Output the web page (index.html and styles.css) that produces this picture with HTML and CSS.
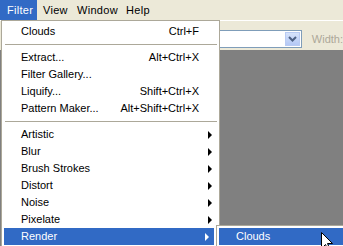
FILE: index.html
```html
<!DOCTYPE html>
<html lang="en">
<head>
  <meta charset="UTF-8" />
  <title>Filter menu</title>
  <link rel="stylesheet" href="styles.css">
</head>
<body>
  <div class="app">

    <div class="menubar">
      <span class="top-item active">Filter</span>
      <span class="top-item">View</span>
      <span class="top-item">Window</span>
      <span class="top-item">Help</span>
    </div>

    <div class="optionsbar">
      <div class="combo">
        <div class="combo-btn">
          <svg width="9" height="6" viewBox="0 0 9 6"><path d="M1 1 L4.5 4.5 L8 1" fill="none" stroke="#4d6185" stroke-width="2"/></svg>
        </div>
      </div>
      <span class="disabled-label">Width:</span>
    </div>

    <div class="canvas"></div>

    <div class="menu">
      <div class="item"><span class="label">Clouds</span><span class="key">Ctrl+F</span><span class="sub"></span></div>
      <div class="sep"></div>
      <div class="item"><span class="label">Extract...</span><span class="key">Alt+Ctrl+X</span><span class="sub"></span></div>
      <div class="item"><span class="label">Filter Gallery...</span><span class="key"></span><span class="sub"></span></div>
      <div class="item"><span class="label">Liquify...</span><span class="key">Shift+Ctrl+X</span><span class="sub"></span></div>
      <div class="item"><span class="label">Pattern Maker...</span><span class="key">Alt+Shift+Ctrl+X</span><span class="sub"></span></div>
      <div class="sep"></div>
      <div class="item"><span class="label">Artistic</span><span class="sub arrow"></span></div>
      <div class="item"><span class="label">Blur</span><span class="sub arrow"></span></div>
      <div class="item"><span class="label">Brush Strokes</span><span class="sub arrow"></span></div>
      <div class="item"><span class="label">Distort</span><span class="sub arrow"></span></div>
      <div class="item"><span class="label">Noise</span><span class="sub arrow"></span></div>
      <div class="item"><span class="label">Pixelate</span><span class="sub arrow"></span></div>
      <div class="item selected"><span class="label">Render</span><span class="sub arrow"></span></div>
    </div>

    <div class="submenu">
      <div class="item selected"><span class="label">Clouds</span></div>
    </div>

    <svg class="pointer" width="12" height="20" viewBox="0 0 12 20">
      <path d="M0.5 0.5 L0.5 16.5 L4.5 12.5 L7.5 19.5 L9.5 18.5 L6.5 11.5 L11.5 11.5 Z" fill="#fff" stroke="#000" stroke-width="1"/>
    </svg>

  </div>
</body>
</html>
```

FILE: styles.css
```css
html, body {
  margin: 0;
  padding: 0;
}

body {
  font-family: "Liberation Sans", Arial, sans-serif;
  font-size: 11px;
  color: #000;
  overflow: hidden;
}

.app {
  position: relative;
  width: 343px;
  height: 246px;
  display: flex;
  flex-direction: column;
  background: #ece9d8;
  overflow: hidden;
}

/* top menu bar */
.menubar {
  height: 20px;
  display: grid;
  grid-template-columns: 37px 34px 49px 32px;
  background: #ece9d8;
}

.top-item {
  padding-left: 6px;
  line-height: 20px;
  letter-spacing: 0.3px;
}

.top-item.active {
  padding-left: 7px;
  background: #316ac5;
  color: #fff;
}

/* tool options bar */
.optionsbar {
  height: 30px;
  box-sizing: border-box;
  border-top: 1px solid #fff;
  display: flex;
  align-items: flex-start;
  padding-top: 9px;
  padding-left: 140px;
}

.combo {
  width: 162px;
  height: 14px;
  border: 1px solid #7f9db9;
  background: #fff;
  display: flex;
  justify-content: flex-end;
  padding: 1px;
}

.combo-btn {
  width: 15px;
  height: 14px;
  background: linear-gradient(#d6e3fb, #b4c8f5);
  border: 1px solid #b9cbf3;
  box-sizing: border-box;
  display: flex;
  align-items: center;
  justify-content: center;
}

.disabled-label {
  margin-left: 10px;
  line-height: 18px;
  color: #aca899;
}

.canvas {
  flex: 1;
  background: #808080;
}

/* dropdown menus */
.menu, .submenu {
  position: absolute;
  background: #fff;
  border: 1px solid #aca899;
  padding: 2px;
}

.menu {
  top: 20px;
  left: 1px;
  width: 213px;
}

.submenu {
  top: 225px;
  left: 216px;
  width: 140px;
}

.item {
  height: 17px;
  line-height: 17px;
  display: flex;
  padding-left: 17px;
}

.item .label {
  flex: 1;
}

.sub {
  width: 18px;
  position: relative;
}

.arrow::after {
  content: "";
  position: absolute;
  left: 9px;
  top: 5px;
  border-left: 4px solid #000;
  border-top: 4px solid transparent;
  border-bottom: 4px solid transparent;
}

.item.selected {
  background: #316ac5;
  color: #fff;
}

.item.selected .arrow::after {
  border-left-color: #fff;
}

.menu .item.selected {
  margin-right: 3px;
}

.sep {
  height: 1px;
  margin: 4px 0 4px 1px;
  background: #aca899;
}

.pointer {
  position: absolute;
  left: 321px;
  top: 232px;
}
```
